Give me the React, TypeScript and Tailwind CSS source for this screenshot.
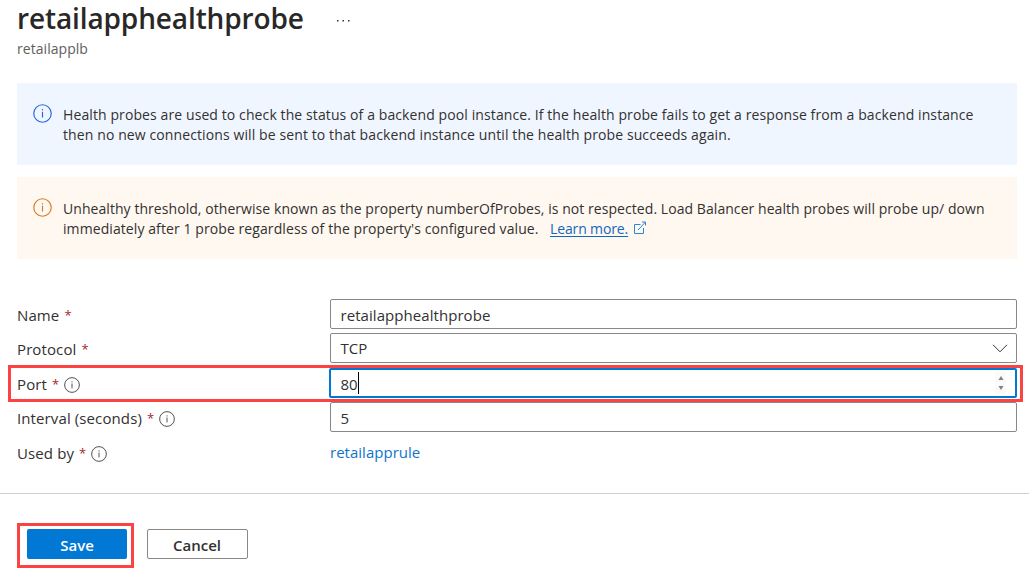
import type { ReactNode } from 'react';

function InfoIcon({ size, className = '' }: { size: number; className?: string }) {
  return (
    <svg width={size} height={size} viewBox="0 0 20 20" fill="none" stroke="currentColor" strokeWidth="1.2" className={`shrink-0 ${className}`}>
      <circle cx="10" cy="10" r="9.2" />
      <path d="M10 8.2v6" />
      <path d="M10 5.4v1.4" />
    </svg>
  );
}

function Label({ text, info, className }: { text: string; info?: boolean; className?: string }) {
  return (
    <div className={`flex w-[313px] shrink-0 items-center whitespace-nowrap ${className ?? ''}`}>
      <span className="tracking-[0.11px]">{text}</span>
      <span className="ml-[5px] w-[7px] text-[13px] text-[#a4262c]">*</span>
      {info && <InfoIcon size={16} className="mt-0.5 ml-[5px] text-[#4a4947]" />}
    </div>
  );
}

function Row({ label, info, className, labelClass, children }: { label: string; info?: boolean; className: string; labelClass?: string; children: ReactNode }) {
  return (
    <div className={`flex h-[30px] items-center ${className}`}>
      <Label text={label} info={info} className={labelClass} />
      {children}
    </div>
  );
}

const field = 'flex h-[30px] w-[687px] items-center rounded-[2px] border border-[#8a8886] bg-white pl-[9.5px] tracking-[0.06px]';

export default function App() {
  return (
    <div className="relative h-[568px] w-[1029px] overflow-hidden bg-white font-['Open_Sans','Noto_Sans',sans-serif] text-[15px] leading-5 text-[#323130]">
      <header className="h-[83px] pl-[17px]">
        <div className="flex h-9 items-center">
          <h1 className="w-[287px] text-[28px] leading-9 font-semibold tracking-[-0.12px] whitespace-nowrap text-[#292827]">retailapphealthprobe</h1>
          <svg width="14" height="4" viewBox="0 0 14 4" fill="#323130" className="mt-[6px] ml-8">
            <rect x="1" y="1" width="1.5" height="1.5" />
            <rect x="6.5" y="1" width="1.5" height="1.5" />
            <rect x="12" y="1" width="1.5" height="1.5" />
          </svg>
        </div>
        <p className="mt-[3px] text-sm leading-5 tracking-[0.05px] text-[#605e5c]">retailapplb</p>
      </header>

      <section className="ml-[17px] flex h-[82px] w-[1000px] bg-[#f0f6ff] text-sm leading-5 whitespace-nowrap">
        <InfoIcon size={19} className="mt-[21px] ml-4 text-[#2266e3]" />
        <div className="mt-[22px] ml-[11px] leading-5">
          <p className="tracking-[0.1px]">Health probes are used to check the status of a backend pool instance. If the health probe fails to get a response from a backend instance</p>
          <p className="tracking-[0.105px]">then no new connections will be sent to that backend instance until the health probe succeeds again.</p>
        </div>
      </section>

      <section className="mt-3 ml-[17px] flex h-[82px] w-[1000px] bg-[#fff8f0] text-sm leading-5 whitespace-nowrap">
        <InfoIcon size={19} className="mt-[21px] ml-4 text-[#db7520]" />
        <div className="mt-[22px] ml-[11px] leading-5">
          <p className="tracking-[0.06px]">Unhealthy threshold, otherwise known as the property numberOfProbes, is not respected. Load Balancer health probes will probe up/ down</p>
          <p className="flex">
            <span className="w-[487px] tracking-[0.085px]">immediately after 1 probe regardless of the property's configured value.</span>
            <a className="w-[78px] tracking-[-0.13px] text-[#1068bf] underline underline-offset-2">Learn more.</a>
            <svg width="13" height="13" viewBox="0 0 13 13" fill="none" stroke="#2f86d6" strokeWidth="1" className="mt-[2px] ml-[6px]">
              <path d="M6.500 3.500H.5v9h9V7M4 9 11.500 1M8 1h3.500v3.500" />
            </svg>
          </p>
        </div>
      </section>

      <main className="mt-10 pl-[17px]">
        <Row label="Name" className="" labelClass="pt-px">
          <div className={`${field} pt-0.5`}>retailapphealthprobe</div>
        </Row>
        <Row label="Protocol" className="mt-1" labelClass="pt-px">
          <div className={`${field} justify-between pr-2`}>
            <span>TCP</span>
            <svg width="16" height="9" viewBox="0 0 16 9" fill="none" stroke="#323130" strokeWidth="1">
              <path d="M1 .8 8 7.800 15 .8" />
            </svg>
          </div>
        </Row>
        <Row label="Port" info className="mt-[5px]" labelClass="-mr-px pt-px">
          <div className="flex h-[30px] w-[688px] items-center justify-between rounded-[2px] border-2 border-[#0078d4] bg-white pr-[9px] pl-[9.5px]">
            <span className="flex h-[22px] items-center border-r border-black pt-px">80</span>
            <span className="flex h-[22px] w-[11px] flex-col items-center justify-between bg-[#fafafa] py-1">
              <svg width="6" height="4" viewBox="0 0 6 4" fill="#808080"><path d="M.5 4 3 0 5.500 4z" /></svg>
              <svg width="6" height="4" viewBox="0 0 6 4" fill="#808080"><path d="M.5 0h5L3 4z" /></svg>
            </span>
          </div>
        </Row>
        <Row label="Interval (seconds)" info className="mt-1" labelClass="pt-px">
          <div className={`${field} pt-0.5`}>5</div>
        </Row>
        <Row label="Used by" info className="mt-[5px]" labelClass="pt-0.5">
          <a className="tracking-[0.02px] text-[#0e74cc]">retailapprule</a>
        </Row>
      </main>

      <footer className="mt-[26px] flex border-t border-[#d2d0ce] pt-[29px] pl-[17px]">
        <div className="h-[45px] w-[117px] border-[3px] border-[#fb4343] px-[7px] pt-[3px]">
          <button className="flex h-[30px] w-[100px] items-center justify-center rounded-[2px] bg-[#0078d4] pt-0.5 text-[15px] leading-5 font-semibold text-white">Save</button>
        </div>
        <button className="mt-[6px] ml-[13px] flex h-[30px] w-[101px] items-center justify-center rounded-[2px] border border-[#8a8886] pt-0.5 pr-px text-[15px] leading-5 font-semibold">Cancel</button>
      </footer>

      <div className="pointer-events-none absolute top-[365px] left-2 h-[37px] w-[1015px] border-[3px] border-[#fb4343]" />
    </div>
  );
}
